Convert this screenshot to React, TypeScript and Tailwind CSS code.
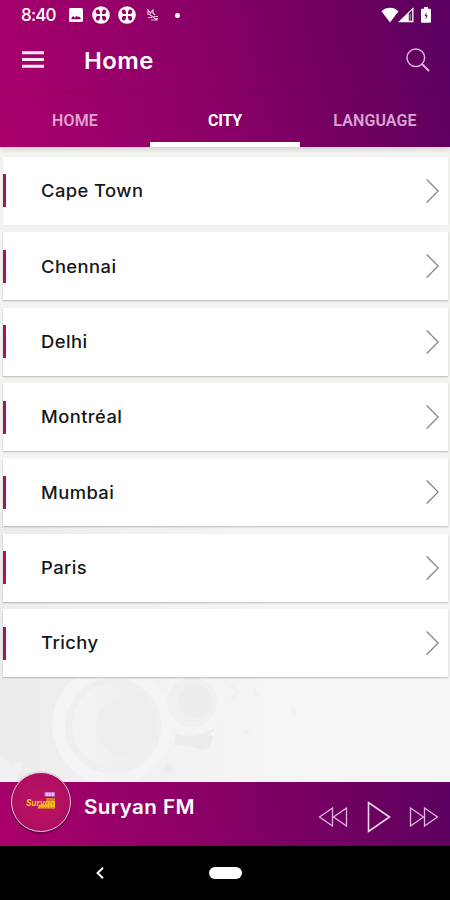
import React from 'react';

const tabs = ['HOME', 'CITY', 'LANGUAGE'];

const cities = ['Cape Town', 'Chennai', 'Delhi', 'Montréal', 'Mumbai', 'Paris', 'Trichy'];

// Round notification icon with four petals
function CloverIcon() {
  return (
    <svg viewBox="0 0 18 18" className="h-[18px] w-[18px]">
      <circle cx="9" cy="9" r="8.8" fill="#fff" />
      <g fill="#8c0567">
        <path d="M8.100 8.100H5.300C2.500 6.500 4 3 6.200 3.600 7.500 4 8.100 5.500 8.100 8.100z" />
        <path d="M9.900 8.100h2.800c2.800-1.600 1.300-5.100-.9-4.500-1.300.4-1.900 1.900-1.900 4.500z" />
        <path d="M8.100 9.900H5.300c-2.800 1.600-1.300 5.100.9 4.500 1.300-.4 1.900-1.900 1.900-4.500z" />
        <path d="M9.900 9.900h2.800c2.800 1.600 1.300 5.100-.9 4.500-1.300-.4-1.900-1.900-1.900-4.500z" />
      </g>
    </svg>
  );
}

function StatusBar() {
  return (
    <div className="flex h-[30px] items-center pl-[21px] pr-[19px] text-white">
      <span className="w-12 text-[17px] font-medium leading-none tracking-[-0.8px]">8:40</span>
      <svg viewBox="0 0 14 14" className="h-[14px] w-[14px]">
        <rect width="14" height="14" rx="1.5" fill="#fff" />
        <path d="M2.500 11.300V9.800l1.700-1.700 1.600 1.700 1.800-2 1.300 1.400 1-1 1.800 1.800v1.300z" fill="#8c0567" />
      </svg>
      <div className="ml-[9px] flex gap-2">
        <CloverIcon />
        <CloverIcon />
      </div>
      <svg viewBox="0 0 12 12" className="ml-[11px] h-3 w-3" fill="none" stroke="#fff" strokeWidth="1.200" opacity="0.750">
        <path d="M1 6V1l2.500 3L6 1v4M2 5l8 6M6 4l2 2M1 8.500h4M4 11h7M7 7.500h4M9 9.500h2" />
      </svg>
      <span className="ml-4 h-[5px] w-[5px] rounded-full bg-white" />
      <div className="ml-auto flex items-center">
        <svg viewBox="0 0 18 16" className="-mr-px h-4 w-[18px]">
          <path d="M.5 4.200C5.300-.4 12.700-.4 17.500 4.200L9 15.500z" fill="#fff" />
        </svg>
        <svg viewBox="0 0 16 16" className="h-4 w-4">
          <path d="M0 15.200L15.500.3v14.900z" fill="#fff" />
          <path d="M10.800 6.300l3.400-3.200v10.700h-3.400z" fill="#6a0762" />
          <path d="M12.300 7v6.500" stroke="#fff" strokeWidth="1" opacity="0.500" />
        </svg>
        <svg viewBox="0 0 10 16" className="ml-[7px] h-4 w-[10px]">
          <path d="M3 0h4v1.800h1.700c.8 0 1.300.5 1.300 1.300v11.400c0 .8-.5 1.300-1.300 1.300H1.300C.5 15.800 0 15.300 0 14.500V3.100c0-.8.5-1.300 1.300-1.300H3z" fill="#fff" />
          <path d="M5.400 5L3.600 8.900h1.200v3.300l2-4H5.400z" fill="#65055f" />
        </svg>
      </div>
    </div>
  );
}

function Header() {
  return (
    <header className="relative z-10 h-[147px] bg-[linear-gradient(76deg,#ab006d_0%,#880066_48%,#5e005f_95%)] shadow-[0_2px_5px_rgba(0,0,0,0.16)]">
      <StatusBar />
      <div className="flex h-16 items-center border-b border-[#4b0054]/25 pb-[3px] pl-[22px] pr-[20px]">
        <svg viewBox="0 0 22 17" className="-mt-px h-[17px] w-[22px]">
          <path d="M0 1.700h22M0 8.500h22M0 15.200h22" stroke="#fff" strokeWidth="3" opacity="0.920" />
        </svg>
        <h1 className="ml-10 mt-[2px] origin-left scale-x-[1.04] text-[23px] font-semibold leading-none tracking-[0.4px] text-white">Home</h1>
        <svg viewBox="0 0 24 24" className="ml-auto h-6 w-6" fill="none" stroke="#dcb4d8">
          <circle cx="9.800" cy="9.800" r="8.800" strokeWidth="1.500" />
          <path d="M16 16l7 7" strokeWidth="1.900" />
        </svg>
      </div>
      <nav className="grid h-[53px] grid-cols-3 font-['Roboto',sans-serif] text-base">
        {tabs.map((tab) => (
          <button
            key={tab}
            className={
              tab === 'CITY'
                ? 'border-b-[5px] border-white pt-[5px] font-bold tracking-[-0.200px] text-white'
                : 'border-b-[5px] border-transparent pt-[5px] font-semibold tracking-[0.1px] text-[#dda3d2]'
            }
          >
            {tab}
          </button>
        ))}
      </nav>
    </header>
  );
}

function CityRow({ name }: { name: string }) {
  return (
    <li className="flex h-[68px] items-center bg-white pr-[9px] shadow-[0_1px_1.500px_rgba(0,0,0,0.24)] first:shadow-[0_0_3px_rgba(0,0,0,0.06)]">
      <span className="h-[33px] w-[3px] bg-[#aa115f]" />
      <span className="ml-[35px] mt-[2px] origin-left scale-x-[1.08] text-[17px] font-medium tracking-[0.4px] text-[#161616]">{name}</span>
      <svg viewBox="0 0 13 24" className="ml-auto h-6 w-[13px]" fill="none" stroke="#858585" strokeWidth="1.300">
        <path d="M.7.500L12.200 12 .7 23.500" />
      </svg>
    </li>
  );
}

// Faint speaker artwork behind the list
function Backdrop() {
  return (
    <svg viewBox="0 0 450 270" className="absolute bottom-0 left-0 h-[270px] w-[450px]">
      <defs>
        <linearGradient id="haze">
          <stop offset="0" stopColor="#ececec" />
          <stop offset="0.600" stopColor="#f5f5f5" />
        </linearGradient>
        <linearGradient id="cone">
          <stop offset="0" stopColor="#f3f3f3" />
          <stop offset="1" stopColor="#ededed" />
        </linearGradient>
      </defs>
      <rect width="450" height="270" fill="url(#haze)" />
      <circle cx="112" cy="213" r="60" fill="#f4f4f4" />
      <circle cx="113" cy="214" r="48" fill="#efefef" />
      <circle cx="114" cy="213" r="42" fill="url(#cone)" />
      <circle cx="125" cy="215" r="29" fill="#eeeeee" />
      <circle cx="193" cy="190" r="31" fill="#f4f4f4" />
      <circle cx="192" cy="190" r="25" fill="#f0f0f0" />
      <circle cx="195" cy="190" r="17" fill="#ededed" />
      <path d="M176 221q15 9 39-5-4 28-19 20-11-5-22-2zM166 250l8 5-5 8-6-4z" fill="#ececec" />
      <circle cx="214" cy="222" r="3" fill="#f5f5f5" />
      <path d="M0 244l12 9 12-5-8 22H0z" fill="#f1f1f1" />
      <path d="M150 14l20-8 15 6 24-6 15 8" fill="none" stroke="#ededed" strokeWidth="4" />
      <path d="M230 173l8 7-7 8M254 177l5 8M292 197l3 5M244 218l7 4" fill="none" stroke="#f1f1f1" strokeWidth="4" />
    </svg>
  );
}

function StationLogo() {
  return (
    <div className="absolute -top-[10px] left-[11px] flex h-[60px] w-[60px] items-center justify-center rounded-full border-[1.500px] border-[#e5c3dc] bg-[radial-gradient(circle,#bb1265_0%,#b21061_55%,#a20a60_100%)] shadow-[0_1px_2px_rgba(40,0,35,0.8)]">
      <svg viewBox="0 0 34 22" className="mb-[3px] h-[22px] w-[34px] overflow-visible">
        <rect x="20.500" y="2" width="10.500" height="4.500" fill="#c77bd8" />
        <path d="M15 14.500h16v4H13.500z" fill="#f2b319" />
        <path d="M22 8h9v7h-9z" fill="#cf7d2a" />
        <text x="2" y="15.500" textLength="29" lengthAdjust="spacingAndGlyphs" fill="#ffc918" className="font-['Inter',sans-serif] text-[9px] font-bold italic">Suryan</text>
        <text x="22" y="5.500" fill="#fff" className="font-['Inter',sans-serif] text-[3.500px] font-bold">93.5</text>
        <path d="M16 17.500h14" stroke="#d08f22" strokeWidth="1" strokeDasharray="2 1" />
      </svg>
    </div>
  );
}

function Player() {
  return (
    <footer className="relative z-10 flex h-16 items-center bg-[linear-gradient(82deg,#aa006c_0%,#880066_48%,#5e005f_98%)] pl-[84px] pr-[11px]">
      <StationLogo />
      <span className="-mt-[14px] origin-left scale-x-[1.03] text-[20px] font-semibold tracking-[0.400px] text-white">Suryan FM</span>
      <div className="ml-auto mt-[5px] flex items-center">
        <svg viewBox="0 0 30 22" className="h-[22px] w-[30px]" fill="none" stroke="#e2b3dc" strokeWidth="1.300">
          <path d="M14.500 2v18L1.500 11zM28.500 2v18L15.500 11z" />
        </svg>
        <svg viewBox="0 0 24 32" className="ml-[19px] h-8 w-6" fill="none" stroke="#f2d7ef" strokeWidth="1.600">
          <path d="M1.500 1.500v29L22.500 16z" />
        </svg>
        <svg viewBox="0 0 30 22" className="ml-[18px] h-[22px] w-[30px]" fill="none" stroke="#e2b3dc" strokeWidth="1.300">
          <path d="M1.500 2v18l13-9zM15.500 2v18l13-9z" />
        </svg>
      </div>
    </footer>
  );
}

function NavigationBar() {
  return (
    <div className="grid h-[54px] grid-cols-[200px_50px_200px] items-center justify-items-center bg-black">
      <svg viewBox="0 0 8 12" className="h-3 w-2" fill="none" stroke="#fff" strokeWidth="2">
        <path d="M7 .8L1.600 6 7 11.200" />
      </svg>
      <span className="h-3 w-[33px] rounded-full bg-white" />
    </div>
  );
}

export default function App() {
  return (
    <div className="flex h-[900px] w-[450px] flex-col overflow-hidden bg-[#f3f3f0] font-['Inter',sans-serif]">
      <Header />
      <main className="relative flex-1">
        <Backdrop />
        <ul className="relative flex flex-col gap-[7.400px] pl-[3px] pr-[2px] pt-[9.900px]">
          {cities.map((city) => (
            <CityRow key={city} name={city} />
          ))}
        </ul>
      </main>
      <Player />
      <NavigationBar />
    </div>
  );
}
